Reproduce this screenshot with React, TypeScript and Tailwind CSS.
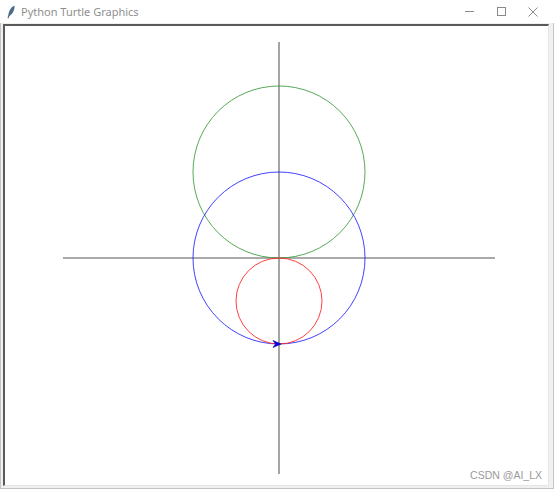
import React from "react";

export default function App() {
  return (
    <div
      className="w-[554px] h-[489px] flex flex-col bg-white overflow-hidden"
      style={{ fontFamily: '"Noto Sans", "Open Sans", sans-serif' }}
    >
      {/* Title bar */}
      <div className="h-[23px] flex items-center bg-white shrink-0">
        <svg width="10" height="14" viewBox="0 0 10 14" className="ml-[6px]">
          <path d="M8.5 0.8 C5 2 3 5.5 2.2 10.5 L1.5 13 L2.6 13.2 L3.4 11 C6.5 9.5 8.8 5 8.5 0.8 Z" fill="#4d6a8a" />
        </svg>
        <span className="ml-[5px] text-[11px] text-[#8f8f8f] leading-none">Python Turtle Graphics</span>
        <div className="flex-1" />
        <div className="flex items-center h-full">
          <div className="w-[32px] h-full flex items-center justify-center">
            <div className="w-[9px] h-px bg-[#8a8a8a]" />
          </div>
          <div className="w-[32px] h-full flex items-center justify-center">
            <div className="w-[9px] h-[9px] border border-[#8a8a8a]" />
          </div>
          <div className="w-[32px] h-full flex items-center justify-center mr-[5px]">
            <svg width="10" height="10" viewBox="0 0 10 10">
              <path d="M0.5 0.5 L9.5 9.5 M9.5 0.5 L0.5 9.5" stroke="#8a8a8a" strokeWidth="1" />
            </svg>
          </div>
        </div>
      </div>

      {/* Body */}
      <div className="flex-1 flex bg-[#f0f0f0] border-l border-r border-b border-[#c4c4c4] pl-[2px] pr-[4px] pt-[1px] pb-[2px]">
        <div className="relative flex-1 bg-white border-t-2 border-l-2 border-t-[#5a5a5a] border-l-[#5a5a5a] border-r border-b border-r-[#e6e6e6] border-b-[#e6e6e6]">
          <svg
            width="543"
            height="459"
            viewBox="5 26 543 459"
            className="block"
          >
            {/* axes */}
            <line x1="63" y1="258" x2="495" y2="258" stroke="#8e8e8e" strokeWidth="1.6" />
            <line x1="279" y1="42" x2="279" y2="474" stroke="#8e8e8e" strokeWidth="1.6" />
            {/* green circle */}
            <circle cx="279" cy="172" r="86" fill="none" stroke="#3a9a3a" strokeWidth="1" opacity="0.85" />
            {/* blue circle */}
            <circle cx="279" cy="258" r="86" fill="none" stroke="#2020ff" strokeWidth="1" opacity="0.85" />
            {/* red circle */}
            <circle cx="279" cy="301" r="43" fill="none" stroke="#ff2020" strokeWidth="1" opacity="0.85" />
            {/* turtle arrow */}
            <polygon points="281,344 273,340.5 275.5,344 273,347.5" fill="#0000ff" stroke="#00008b" strokeWidth="0.6" />
          </svg>
          <div
            className="absolute right-[6px] bottom-[5px] text-[10.5px] text-[#9a9a9a] leading-none"
            style={{ fontFamily: '"Liberation Sans", Arial, sans-serif' }}
          >
            CSDN @AI_LX
          </div>
        </div>
      </div>
    </div>
  );
}
